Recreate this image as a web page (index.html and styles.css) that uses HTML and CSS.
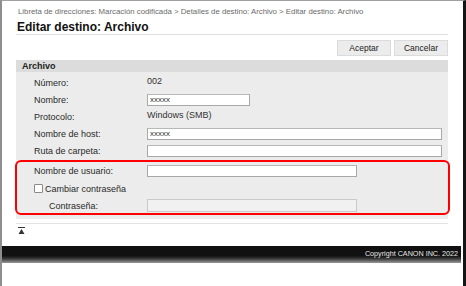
FILE: index.html
```html
<!DOCTYPE html>
<html lang="es">
<head>
<meta charset="utf-8">
<title>Editar destino: Archivo</title>
<link rel="stylesheet" href="styles.css">
</head>
<body>
<div class="frame">
  <div class="inner">
    <main class="content">
      <div class="crumb">Libreta de direcciones: Marcación codificada &gt; Detalles de destino: Archivo &gt; Editar destino: Archivo</div>
      <h1 class="title">Editar destino: Archivo</h1>
      <div class="actions">
        <button class="btn" type="button">Aceptar</button>
        <button class="btn" type="button">Cancelar</button>
      </div>
      <section class="panel">
        <div class="panel-head">Archivo</div>
        <div class="panel-body">
          <div class="row"><span class="lbl">Número:</span><span class="val">002</span></div>
          <div class="row"><span class="lbl">Nombre:</span><span class="field w-s">xxxxx</span></div>
          <div class="row"><span class="lbl">Protocolo:</span><span class="val">Windows (SMB)</span></div>
          <div class="row"><span class="lbl">Nombre de host:</span><span class="field w-l">xxxxx</span></div>
          <div class="row"><span class="lbl">Ruta de carpeta:</span><span class="field w-l"></span></div>
          <div class="highlight">
            <div class="row r-user"><span class="lbl">Nombre de usuario:</span><span class="field w-m"></span></div>
            <div class="row r-check"><span class="check"><span class="box"></span>Cambiar contraseña</span></div>
            <div class="row r-pass"><span class="lbl sub">Contraseña:</span><span class="field w-m disabled"></span></div>
          </div>
        </div>
      </section>
      <div class="totop">
        <svg class="up" width="7" height="7" viewBox="0 0 7 7" aria-hidden="true">
          <rect x="0" y="0" width="7" height="1" fill="#333"/>
          <polygon points="3.5,2 0.5,7 6.5,7" fill="#333"/>
        </svg>
      </div>
    </main>
    <footer class="footer">Copyright CANON INC. 2022</footer>
  </div>
</div>
</body>
</html>
```
FILE: styles.css
```css
* { box-sizing: border-box; }
html, body { margin: 0; padding: 0; background: #fff; }
body { font-family: "Liberation Sans", Arial, sans-serif; color: #333; }

.frame {
  width: 466px;
  height: 286px;
  border-left: 2px solid #8e8e8e;
  border-top: 1px solid #a0a0a0;
  border-right: 3px solid #151515;
  overflow: hidden;
}
.inner { margin-right: 2px; }

.content { padding: 0 13px 0 14px; }

.crumb {
  padding: 5px 0 0 2px;
  font-size: 7.8px;
  line-height: 12px;
  color: #6a6a6a;
  white-space: nowrap;
}

.title {
  margin: 2px 0 0;
  padding-left: 1px;
  font-size: 12px;
  line-height: 14px;
  font-weight: bold;
  color: #111;
  border-bottom: 1px solid #dedede;
  height: 15px;
}

.actions {
  display: flex;
  justify-content: flex-end;
  gap: 3px;
  margin-top: 5px;
}
.btn {
  width: 54px;
  height: 16px;
  padding: 0;
  font-family: inherit;
  font-size: 8.5px;
  color: #222;
  background: #ececec;
  border: 1px solid #dcdcdc;
  border-radius: 0;
}

.panel { margin-top: 4px; }
.panel-head {
  height: 12px;
  line-height: 12px;
  padding-left: 6px;
  font-size: 9px;
  font-weight: bold;
  color: #222;
  background: #dcdcdc;
}
.panel-body {
  background: #ececec;
  padding: 2px 0 4px;
}

.row {
  display: grid;
  grid-template-columns: 113px 1fr;
  align-items: center;
  height: 17px;
  padding-left: 18px;
  font-size: 9px;
}
.lbl { color: #2a2a2a; }
.lbl.sub { padding-left: 15px; }
.val { color: #333; margin-top: -3px; }

.field {
  display: block;
  height: 12px;
  line-height: 10px;
  padding-left: 2px;
  font-size: 8px;
  color: #333;
  background: #fff;
  border: 1px solid #a8a8a8;
  border-top-color: #b8b8b8;
}
.w-s { width: 103px; }
.w-l { width: 295px; }
.w-m { width: 210px; }
.field.disabled { background: #f1f1f1; border-color: #cacaca; height: 13px; }

.highlight {
  margin: 1px -2px 0 -1px;
  border: 2px solid #f00;
  border-radius: 6px;
}
.highlight .row { padding-left: 17px; }
.r-user { height: 17px; }
.r-check { height: 19px; }
.r-pass { height: 15px; }

.check {
  display: flex;
  align-items: center;
  grid-column: 1 / 3;
  color: #2a2a2a;
}
.box {
  width: 9px;
  height: 9px;
  margin-right: 2px;
  background: #fff;
  border: 1px solid #8a8a8a;
  border-radius: 1px;
}

.totop {
  margin-top: 4px;
  border-top: 1px solid #e4e4e4;
  height: 13px;
  padding: 3px 0 0 2px;
}
.up { display: block; }

.footer {
  margin-top: 10px;
  height: 17px;
  padding: 3px 3px 0 0;
  text-align: right;
  font-size: 7.2px;
  line-height: 10px;
  color: #e8e8e8;
  background: linear-gradient(to bottom, #111 0%, #111 58%, #3a3a3a 75%, #9a9a9a 100%);
}
```
